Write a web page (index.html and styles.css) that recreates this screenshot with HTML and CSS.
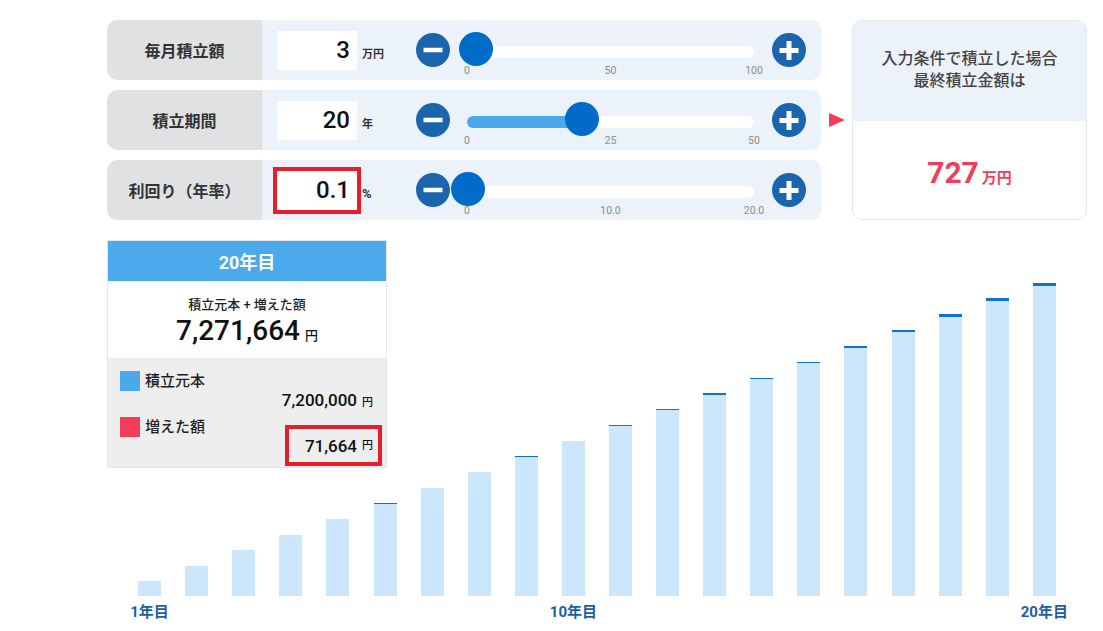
FILE: index.html
```html
<!DOCTYPE html>
<html lang="ja">
<head>
<meta charset="utf-8">
<title>積立シミュレーション</title>
<link rel="stylesheet" href="styles.css">
</head>
<body>
<div class="page">
  <div class="top">
    <div class="controls">
      <div class="row">
        <div class="row-label">毎月積立額</div>
        <div class="row-body">
          <input class="num-box" type="text" value="3">
          <span class="unit">万円</span>
          <button class="step" type="button" aria-label="minus"><svg width="34" height="34" viewBox="0 0 34 34"><circle cx="17" cy="17" r="17" fill="#1b64ae"/><path d="M7.5 17H26.5" stroke="#fff" stroke-width="4.5"/></svg></button>
          <div class="slider">
            <div class="track"><div class="fill" style="width:3%"></div><div class="thumb" style="left:3%"></div></div>
            <div class="ticks"><span>0</span><span>50</span><span>100</span></div>
          </div>
          <button class="step" type="button" aria-label="plus"><svg width="34" height="34" viewBox="0 0 34 34"><circle cx="17" cy="17" r="17" fill="#1b64ae"/><path d="M7.5 17.5H26.5M17 8V27" stroke="#fff" stroke-width="5"/></svg></button>
        </div>
      </div>
      <div class="row">
        <div class="row-label">積立期間</div>
        <div class="row-body">
          <input class="num-box" type="text" value="20">
          <span class="unit">年</span>
          <button class="step" type="button" aria-label="minus"><svg width="34" height="34" viewBox="0 0 34 34"><circle cx="17" cy="17" r="17" fill="#1b64ae"/><path d="M7.5 17H26.5" stroke="#fff" stroke-width="4.5"/></svg></button>
          <div class="slider">
            <div class="track"><div class="fill" style="width:40%"></div><div class="thumb" style="left:40%"></div></div>
            <div class="ticks"><span>0</span><span>25</span><span>50</span></div>
          </div>
          <button class="step" type="button" aria-label="plus"><svg width="34" height="34" viewBox="0 0 34 34"><circle cx="17" cy="17" r="17" fill="#1b64ae"/><path d="M7.5 17.5H26.5M17 8V27" stroke="#fff" stroke-width="5"/></svg></button>
        </div>
      </div>
      <div class="row">
        <div class="row-label">利回り（年率）</div>
        <div class="row-body">
          <input class="num-box marked" type="text" value="0.1">
          <span class="unit unit-pct">%</span>
          <button class="step" type="button" aria-label="minus"><svg width="34" height="34" viewBox="0 0 34 34"><circle cx="17" cy="17" r="17" fill="#1b64ae"/><path d="M7.5 17H26.5" stroke="#fff" stroke-width="4.5"/></svg></button>
          <div class="slider">
            <div class="track"><div class="fill" style="width:0.5%"></div><div class="thumb" style="left:0.5%"></div></div>
            <div class="ticks"><span>0</span><span>10.0</span><span>20.0</span></div>
          </div>
          <button class="step" type="button" aria-label="plus"><svg width="34" height="34" viewBox="0 0 34 34"><circle cx="17" cy="17" r="17" fill="#1b64ae"/><path d="M7.5 17.5H26.5M17 8V27" stroke="#fff" stroke-width="5"/></svg></button>
        </div>
      </div>
    </div>
    <div class="arrow-col"><span class="arrow"></span></div>
    <div class="card">
      <div class="card-head">入力条件で積立した場合<br>最終積立金額は</div>
      <div class="card-body"><span class="card-value">727</span><span class="card-unit">万円</span></div>
    </div>
  </div>

  <div class="chart">
    <div class="bars">
      <div class="col"><div class="bar" style="height:15px"></div></div>
      <div class="col"><div class="bar" style="height:30px"></div></div>
      <div class="col"><div class="bar" style="height:46px"></div></div>
      <div class="col"><div class="bar" style="height:61px"></div></div>
      <div class="col"><div class="bar" style="height:77px"></div></div>
      <div class="col"><div class="bar" style="height:93px;border-top-width:1px"></div></div>
      <div class="col"><div class="bar" style="height:108px"></div></div>
      <div class="col"><div class="bar" style="height:124px"></div></div>
      <div class="col"><div class="bar" style="height:140px;border-top-width:1px"></div></div>
      <div class="col"><div class="bar" style="height:155px"></div></div>
      <div class="col"><div class="bar" style="height:171px;border-top-width:1px"></div></div>
      <div class="col"><div class="bar" style="height:187px;border-top-width:1px"></div></div>
      <div class="col"><div class="bar" style="height:203px;border-top-width:2px"></div></div>
      <div class="col"><div class="bar" style="height:218px;border-top-width:1px"></div></div>
      <div class="col"><div class="bar" style="height:234px;border-top-width:1px"></div></div>
      <div class="col"><div class="bar" style="height:250px;border-top-width:2px"></div></div>
      <div class="col"><div class="bar" style="height:266px;border-top-width:2px"></div></div>
      <div class="col"><div class="bar" style="height:282px;border-top-width:3px"></div></div>
      <div class="col"><div class="bar" style="height:298px;border-top-width:3px"></div></div>
      <div class="col"><div class="bar" style="height:313px;border-top-width:3px"></div></div>
    </div>
    <div class="xlabels">
      <span>1年目</span><span></span><span></span><span></span><span></span><span></span><span></span><span></span><span></span><span>10年目</span>
      <span></span><span></span><span></span><span></span><span></span><span></span><span></span><span></span><span></span><span>20年目</span>
    </div>

    <div class="tooltip">
      <div class="tip-head">20年目</div>
      <div class="tip-total">
        <div class="tip-total-label">積立元本 + 増えた額</div>
        <div class="tip-total-value"><span>7,271,664<span class="yen">円</span></span></div>
      </div>
      <div class="tip-breakdown">
        <div class="legend"><span class="swatch swatch-blue"></span>積立元本</div>
        <div class="val val-1"><span>7,200,000<span class="yen-s">円</span></span></div>
        <div class="legend legend-2"><span class="swatch swatch-red"></span>増えた額</div>
        <div class="val val-2"><span class="boxed">71,664<span class="yen-s">円</span></span></div>
      </div>
    </div>
  </div>
</div>
</body>
</html>
```

FILE: styles.css
```css
html, body {
  margin: 0;
  padding: 0;
  background: #ffffff;
}

body {
  font-family: Roboto, "Noto Sans CJK JP", sans-serif;
  color: #222;
}

.page {
  width: 980px;
  padding: 20px 0 0 107px;
}

/* ---------- top section ---------- */
.top {
  display: flex;
  height: 200px;
}

.controls {
  width: 714px;
  display: flex;
  flex-direction: column;
  gap: 10px;
}

.row {
  display: flex;
  height: 60px;
}

.row-label {
  width: 155px;
  background: #e0e1e3;
  border-radius: 10px 0 0 10px;
  display: flex;
  align-items: center;
  justify-content: center;
  font-size: 16px;
  font-weight: 700;
  color: #333;
}

.row-body {
  flex: 1;
  background: #ebf2f9;
  border-radius: 0 10px 10px 0;
  display: flex;
  align-items: center;
  padding: 0 15px;
}

.num-box {
  width: 80px;
  height: 39px;
  box-sizing: border-box;
  border: none;
  margin: 0;
  padding: 0 7px 0 0;
  background: #fff;
  text-align: right;
  font-family: Roboto, sans-serif;
  font-size: 24px;
  font-weight: 500;
  color: #111;
  outline: none;
}

.num-box.marked {
  outline: 4px solid #e61e2a;
}

.unit {
  width: 59px;
  box-sizing: border-box;
  padding-left: 5px;
  margin-top: 6px;
  font-size: 11px;
  font-weight: 700;
  color: #333;
}

.unit-pct {
  font-size: 13px;
  margin-top: 7px;
}

.step {
  width: 34px;
  height: 34px;
  padding: 0;
  margin: 0;
  border: none;
  background: none;
  display: flex;
  flex: none;
}

.slider {
  width: 287px;
  align-self: stretch;
  margin: 0 18px 0 17px;
  padding-top: 26px;
  display: flex;
  flex-direction: column;
}

.track {
  position: relative;
  height: 12px;
  background: #fff;
  border-radius: 6px;
}

.fill {
  height: 100%;
  background: #4aa8eb;
  border-radius: 6px 0 0 6px;
}

.thumb {
  position: absolute;
  top: -14px;
  width: 34px;
  height: 34px;
  border-radius: 50%;
  background: #006bc9;
  transform: translateX(-50%);
}

.ticks {
  display: flex;
  justify-content: space-between;
  margin-top: 7px;
  height: 12px;
  font-size: 10.5px;
  line-height: 12px;
  color: #8c8c8c;
}

.ticks span {
  width: 0;
  display: flex;
  justify-content: center;
  white-space: nowrap;
}

.arrow-col {
  width: 31px;
  display: flex;
  align-items: center;
  justify-content: center;
}

.arrow {
  width: 0;
  height: 0;
  border-left: 16px solid #f23d5a;
  border-top: 7.5px solid transparent;
  border-bottom: 7.5px solid transparent;
}

.card {
  width: 235px;
  height: 200px;
  box-sizing: border-box;
  border: 1px solid #e1e9f1;
  border-radius: 10px;
  overflow: hidden;
  display: flex;
  flex-direction: column;
}

.card-head {
  height: 100px;
  box-sizing: border-box;
  padding-bottom: 2px;
  background: #ebf2f9;
  display: flex;
  align-items: center;
  justify-content: center;
  text-align: center;
  font-size: 16px;
  line-height: 22px;
  font-weight: 500;
  color: #444;
}

.card-body {
  flex: 1;
  display: flex;
  align-items: baseline;
  justify-content: center;
  padding-top: 34px;
  box-sizing: border-box;
  color: #f23d5a;
}

.card-value {
  font-size: 30px;
  line-height: 36px;
  font-weight: 700;
}

.card-unit {
  font-size: 15px;
  font-weight: 700;
  margin-left: 3px;
}

/* ---------- chart ---------- */
.chart {
  position: relative;
}

.bars {
  display: flex;
  align-items: flex-end;
  height: 376px;
  width: 942px;
  margin-left: 19px;
}

.col {
  flex: 1 1 0;
  display: flex;
  justify-content: center;
}

.bar {
  width: 23px;
  box-sizing: border-box;
  background: #cce6fc;
  border-top: 0 solid #1470d0;
}

.xlabels {
  display: flex;
  width: 942px;
  margin-left: 19px;
  padding-top: 4px;
}

.xlabels span {
  flex: 1 1 0;
  min-width: 0;
  height: 24px;
  display: flex;
  justify-content: center;
  white-space: nowrap;
  font-size: 15px;
  line-height: 24px;
  font-weight: 700;
  color: #1a5ea6;
}

.tooltip {
  position: absolute;
  left: 0;
  top: 20px;
  width: 280px;
  box-sizing: border-box;
  border: 1px solid #e6e6e6;
  background: #fff;
}

.tip-head {
  height: 40px;
  background: #4aaaec;
  color: #fff;
  font-size: 18px;
  font-weight: 700;
  display: flex;
  align-items: center;
  justify-content: center;
}

.tip-total {
  height: 77px;
  box-sizing: border-box;
  padding-top: 15px;
  text-align: center;
}

.tip-total-label {
  height: 18px;
  font-size: 13px;
  line-height: 18px;
  font-weight: 500;
  color: #222;
}

.tip-total-value {
  margin-top: 2px;
  height: 30px;
  display: flex;
  align-items: center;
  justify-content: center;
  font-size: 28px;
  line-height: 30px;
  font-weight: 500;
  color: #111;
}

.yen {
  font-size: 13px;
  line-height: 13px;
  margin-left: 5px;
}

.tip-breakdown {
  height: 109px;
  box-sizing: border-box;
  background: #eeeeee;
  padding: 13px 4px 0 12px;
}

.legend {
  display: flex;
  align-items: center;
  height: 20px;
  font-size: 15px;
  line-height: 20px;
  font-weight: 500;
  color: #222;
}

.legend-2 {
  margin-top: 7px;
}

.swatch {
  width: 20px;
  height: 20px;
  margin-right: 5px;
}

.swatch-blue {
  background: #4aa8eb;
}

.swatch-red {
  background: #f23d5a;
}

.val {
  display: flex;
  justify-content: flex-end;
  align-items: center;
  height: 20px;
  font-size: 17px;
  line-height: 20px;
  font-weight: 500;
  color: #111;
}

.val-1 {
  margin-top: -1px;
  padding-right: 9px;
}

.val-2 {
  margin-top: -12px;
  height: 41px;
}

.boxed {
  height: 41px;
  box-sizing: border-box;
  display: flex;
  align-items: center;
  border: 4px solid #e61e2a;
  padding: 0 5px 0 16px;
}

.yen-s {
  font-size: 11px;
  line-height: 11px;
  margin-left: 5px;
}
```
